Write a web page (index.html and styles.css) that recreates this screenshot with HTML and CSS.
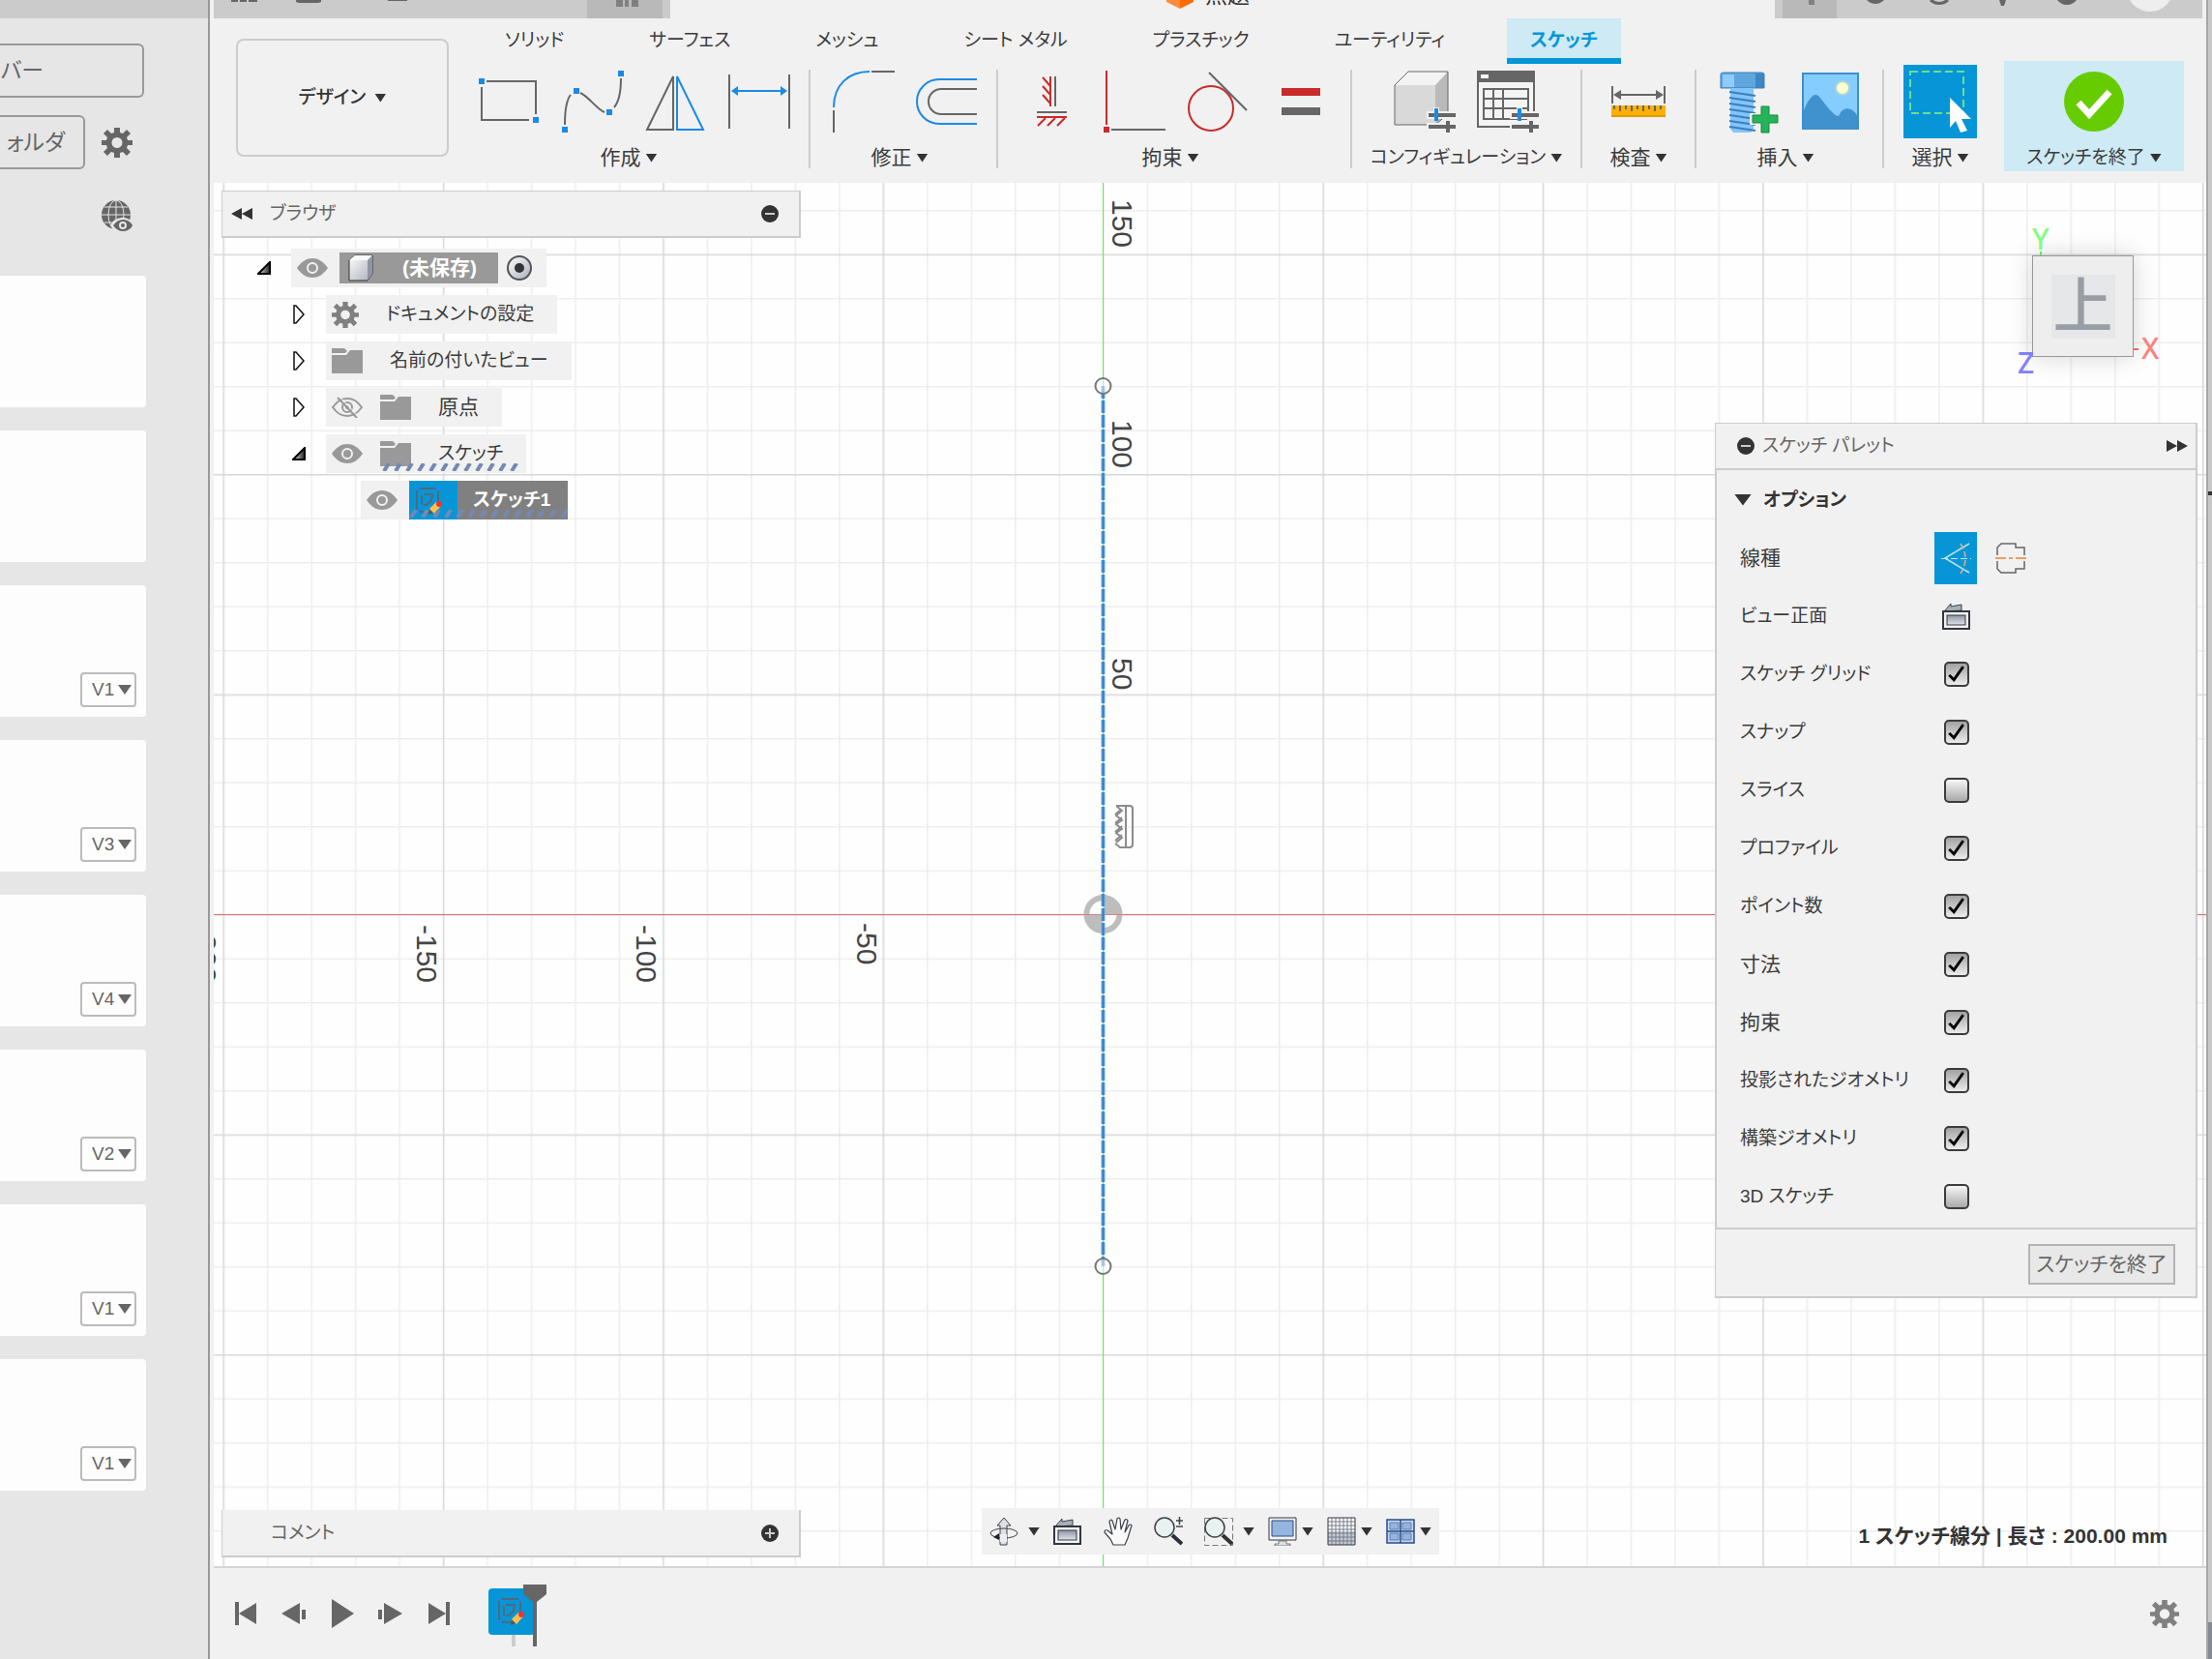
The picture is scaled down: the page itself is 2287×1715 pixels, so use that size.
FILE: index.html
```html
<!DOCTYPE html>
<html lang="ja">
<head>
<meta charset="utf-8">
<title>無題 - スケッチ</title>
<link rel="stylesheet" href="styles.css">
</head>
<body>
<svg class="sprite" aria-hidden="true">
  <defs>
    <linearGradient id="steel" x1="0" y1="0" x2="1" y2="1"><stop offset="0" stop-color="#fff"/><stop offset="1" stop-color="#a9aebb"/></linearGradient>
    <linearGradient id="steelV" x1="0" y1="0" x2="0" y2="1"><stop offset="0" stop-color="#8d95a3"/><stop offset="1" stop-color="#dfe4ea"/></linearGradient>
    <linearGradient id="fade" x1="0" y1="0" x2="1" y2="0"><stop offset="0" stop-color="#eee"/><stop offset="1" stop-color="#222"/></linearGradient>
    <pattern id="hatch" width="12" height="8" patternUnits="userSpaceOnUse"><path d="M2 8L7 0" stroke="#7389b3" stroke-width="4"/></pattern>
  </defs>
  <symbol id="gear" viewBox="0 0 32 32">
    <path fill-rule="evenodd" d="M13 1h6v5l3 1 4-4 4 4-4 4 1 3h5v5h-5l-1 3 4 4-4 4-4-4-3 1v5h-6v-5l-3-1-4 4-4-4 4-4-1-3H0v-5h5l1-3-4-4 4-4 4 4 3-1zM16 11a5 5 0 1 0 0 11a5 5 0 0 0 0-11z" fill="currentColor"/>
  </symbol>
  <symbol id="eye" viewBox="0 0 32 20">
    <path d="M0 10C5 3 10 0 16 0s11 3 16 10c-5 7-10 10-16 10S5 17 0 10z" fill="#999"/><circle cx="16" cy="10" r="5" fill="none" stroke="#f1f1f1" stroke-width="2"/>
  </symbol>
  <symbol id="eye-off" viewBox="0 0 32 22">
    <g fill="none" stroke="#999" stroke-width="2"><path d="M1 11C6 4 10 2 16 2s10 2 15 9c-5 7-9 9-15 9S6 18 1 11z"/><circle cx="16" cy="11" r="5"/><circle cx="16" cy="11" r="1"/><path d="M6 1L26 22"/></g><path d="M9 1L28 21" stroke="#f1f1f1" stroke-width="1"/>
  </symbol>
  <symbol id="folder" viewBox="0 0 32 26">
    <path d="M0 0h13l3 3-2 2H0z" fill="#999"/><path d="M0 7h15l4-5h13v24H0z" fill="#999"/>
  </symbol>
  <symbol id="look" viewBox="0 0 30 30">
    <path d="M2 10L9 2v3l11-2v6z" fill="#a7b0b8" stroke="#3d424a"/>
    <rect x="1" y="10" width="27" height="18" fill="#f4f4f6" stroke="#33373f" stroke-width="2"/>
    <rect x="5" y="14" width="19" height="10" fill="url(#steelV)" stroke="#33373f"/>
  </symbol>
  <symbol id="sketch" viewBox="0 0 40 40">
    <g fill="none" stroke="#4f6a7c" stroke-width="2"><path d="M8 8h22v14M8 8v24h14M13 14h11c0 7-4 11-11 12z"/></g>
    <g fill="#1a8ae6"><path d="M6 6h4v4H6zM28 6h4v4h-4zM6 30h4v4H6zM12 12h3v3h-3zM12 25h3v3h-3z"/></g>
    <path d="M20 35l1-6 4 4z" fill="#555"/><path d="M21 29l7-7 5 4-7 8z" fill="#ffc04d"/><circle cx="31" cy="24" r="3" fill="#e33"/>
  </symbol>
  <symbol id="minus" viewBox="0 0 20 20"><circle cx="10" cy="10" r="9" fill="#333"/><path d="M5 10h10" stroke="#ccc" stroke-width="2"/></symbol>
  <symbol id="plus" viewBox="0 0 20 20"><circle cx="10" cy="10" r="9" fill="#333"/><path d="M5 10h10M10 5v10" stroke="#ccc" stroke-width="2"/></symbol>
  <symbol id="closed" viewBox="0 0 14 20"><path d="M2 1h2l8 9-8 9H2z" fill="#fff" stroke="#111" stroke-width="1.5"/></symbol>
  <symbol id="open" viewBox="0 0 14 14"><path d="M13 1v12H1z" fill="url(#fade)" stroke="#000" stroke-width="2"/></symbol>
  <symbol id="adjust" viewBox="0 0 64 64">
    <path d="M34 42h7v-4h6v4h18v8h-5v4h5v8h-6v4h-6v-4H34v-8h18v-4H34z" fill="#f1f1f1"/>
    <path d="M36 44h28v4H36zM36 56h28v4H36zM54 52h4v12h-4z" fill="#666"/><path d="M42 39h4v13h-4z" fill="#1a8ae6"/>
  </symbol>
</svg>

<div class="app">
  <aside class="data-panel">
    <div class="data-top"></div>
    <div class="data-tools">
      <div class="data-row"><button class="side-button server">バー</button></div>
      <div class="data-row"><button class="side-button new-folder">ォルダ</button><svg class="side-icon"><use href="#gear"/></svg></div>
      <div class="data-row globe-row">
        <svg class="side-icon" viewBox="0 0 32 32"><circle cx="15" cy="15" r="15" fill="#666"/><g fill="none" stroke="#e6e6e6" stroke-width="1"><path d="M15 0v30M0 15h30M3 7h24M3 23h24"/><ellipse cx="15" cy="15" rx="8" ry="15"/></g><path d="M9 26c3-6 8-8 13-8s8 2 11 8c-3 6-8 8-12 8s-9-2-12-8z" fill="#e6e6e6"/><path d="M12 26c3-4 6-6 10-6s8 2 10 6c-2 4-6 6-10 6s-7-2-10-6z" fill="#666"/><circle cx="22" cy="26" r="3" fill="none" stroke="#e6e6e6" stroke-width="2"/></svg>
      </div>
    </div>
    <ul class="cards">
      <li class="card"></li>
      <li class="card"></li>
      <li class="card"><label class="version"><select aria-label="バージョン"><option>V1</option></select><i class="caret"></i></label></li>
      <li class="card"><label class="version"><select aria-label="バージョン"><option>V3</option></select><i class="caret"></i></label></li>
      <li class="card"><label class="version"><select aria-label="バージョン"><option>V4</option></select><i class="caret"></i></label></li>
      <li class="card"><label class="version"><select aria-label="バージョン"><option>V2</option></select><i class="caret"></i></label></li>
      <li class="card"><label class="version"><select aria-label="バージョン"><option>V1</option></select><i class="caret"></i></label></li>
      <li class="card"><label class="version"><select aria-label="バージョン"><option>V1</option></select><i class="caret"></i></label></li>
    </ul>
  </aside>

  <main class="workspace">
    <header class="titlebar">
      <div class="quick">
        <svg class="quick-icons" viewBox="0 0 386 19"><path d="M18 0h7v2h-7zM27 0h7v2h-7zM36 0h9v2h-9zM85 0h26v2l-3 1H88l-3-1zM180 0h20v1h-20z" fill="#666"/></svg>
        <div class="quick-active"><svg viewBox="0 0 78 19"><path d="M30 0h7v7h-7zM39 0h4v7h-4zM46 0h7v7h-7z" fill="#808080"/></svg></div>
      </div>
      <div class="doc-title"><svg viewBox="0 0 28 9"><path d="M0 0h14v9L0 2z" fill="#ff8b3d"/><path d="M14 0h14v2L14 9z" fill="#ff6b00"/></svg><span>無題</span></div>
      <div class="account">
        <div class="account-active"><svg viewBox="0 0 56 19"><path d="M27 0h6v5h-6z" fill="#808080"/></svg></div>
        <svg class="account-icons" viewBox="0 0 378 19"><path d="M31 0h18q-4 4-9 4t-9-4zM168 0h7l-2 6h-3zM228 0h20q-4 5-10 5t-10-5z" fill="#666"/><path d="M97 0q9 7 18 0" fill="none" stroke="#666" stroke-width="3"/><circle cx="324" cy="-12" r="24" fill="#eee"/></svg>
      </div>
    </header>

    <section class="ribbon">
      <button class="mode" aria-haspopup="menu">デザイン<i class="caret"></i></button>
      <div class="ribbon-body">
        <nav class="tabs">
          <button class="tab">ソリッド</button><button class="tab">サーフェス</button><button class="tab">メッシュ</button><button class="tab">シート メタル</button><button class="tab">プラスチック</button><button class="tab">ユーティリティ</button><button class="tab tab-on">スケッチ</button>
        </nav>
        <div class="groups">
          <div class="group">
            <div class="tools">
              <svg viewBox="0 0 64 64"><path d="M8 11H59V45M3 17V51H52" fill="none" stroke="#666" stroke-width="2"/><path d="M0 8h6v6H0zM56 48h6v6h-6z" fill="#1a8ae6"/></svg>
              <svg viewBox="0 0 64 64"><path d="M3 56C3 40 5 30 9 25M19 23C28 27 36 40 44 43M54 38C59 32 61 20 61 8" fill="none" stroke="#666" stroke-width="2"/><path d="M0 58h6v6H0zM12 18h6v6h-6zM46 40h6v6h-6zM58 0h6v6h-6z" fill="#1a8ae6"/></svg>
              <svg viewBox="0 0 64 64"><g fill="none" stroke-width="2"><path d="M2 61H29V6z" stroke="#666"/><path d="M33 61H60L33 6z" stroke="#1a8ae6"/></g></svg>
              <svg viewBox="0 0 64 64"><path d="M1 4V60M63 4V60" stroke="#666" stroke-width="2"/><path d="M8 21H56" stroke="#1a8ae6" stroke-width="2"/><path d="M3 21l7-5v10zM61 21l-7-5v10z" fill="#1a8ae6"/></svg>
            </div>
            <button class="menu">作成<i class="caret"></i></button>
          </div>
          <i class="sep"></i>
          <div class="group">
            <div class="tools">
              <svg viewBox="0 0 64 64"><g fill="none" stroke-width="2"><path d="M1 38C1 15 16 1 38 1" stroke="#1a8ae6"/><path d="M40 1H64M1 41V64" stroke="#666"/></g></svg>
              <svg viewBox="0 0 64 64"><g fill="none" stroke-width="2"><path d="M63 9H24A23 23 0 0 0 24 55H63" stroke="#1a8ae6"/><path d="M63 19H26A13 13 0 0 0 26 45H63" stroke="#666"/></g></svg>
            </div>
            <button class="menu">修正<i class="caret"></i></button>
          </div>
          <i class="sep"></i>
          <div class="group">
            <div class="tools">
              <svg viewBox="0 0 64 64"><g fill="none" stroke-width="2"><path d="M31 6V37M23 7l8 9M23 16l8 9M23 25l8 9M17 48H48M26 49l-8 8M36 49l-8 8M46 49l-8 8" stroke="#c92a2a"/><path d="M36 6V37M17 43H48" stroke="#666"/></g></svg>
              <svg viewBox="0 0 64 64"><path d="M3 0V56" stroke="#c92a2a" stroke-width="2"/><path d="M0 58h6v6H0z" fill="#c92a2a"/><path d="M8 61H64" stroke="#666" stroke-width="2"/></svg>
              <svg viewBox="0 0 64 64"><circle cx="25" cy="39" r="23" fill="none" stroke="#c92a2a" stroke-width="2"/><path d="M23 2L62 41" stroke="#666" stroke-width="2"/></svg>
              <svg viewBox="0 0 64 64"><path d="M12 18h40v8H12z" fill="#c92a2a"/><path d="M12 38h40v8H12z" fill="#666"/></svg>
            </div>
            <button class="menu">拘束<i class="caret"></i></button>
          </div>
          <i class="sep"></i>
          <div class="group config">
            <div class="tools">
              <svg viewBox="0 0 64 64"><path d="M1 15H43V56H1z" fill="#d9d9d9"/><path d="M1 15L15 1H56L43 15z" fill="#f3f3f3"/><path d="M43 15L56 1V45L43 56z" fill="#bababa"/><path d="M1 15L15 1H56V45L43 56H1z" fill="none" stroke="#666"/><use href="#adjust" width="64" height="64"/></svg>
              <svg viewBox="0 0 64 64"><path d="M1 1H59V58H1z" fill="#f4f4f4" stroke="#666" stroke-width="2"/><path d="M0 0h60v12H0z" fill="#666"/><path d="M4 4h8v4H4z" fill="#fff"/><path d="M7 19H53V50H7zM7 29H53M7 39H53M17 19V50M27 19V50" fill="none" stroke="#666" stroke-width="2"/><use href="#adjust" width="64" height="64"/></svg>
            </div>
            <button class="menu">コンフィギュレーション<i class="caret"></i></button>
          </div>
          <i class="sep"></i>
          <div class="group inspect">
            <div class="tools">
              <svg viewBox="0 0 64 64"><path d="M5 16V34M59 16V34M10 25H54" stroke="#666" stroke-width="2"/><path d="M6 25l8-5v10zM58 25l-8-5v10z" fill="#666"/><path d="M4 36h56v12H4z" fill="#ffb000"/><path d="M4 47H60" stroke="#e69a00" stroke-width="2"/><path d="M7 36v4M13 36v6M19 36v4M25 36v6M31 36v4M37 36v6M43 36v4M49 36v6M55 36v4" stroke="#666" stroke-width="2"/></svg>
            </div>
            <button class="menu">検査<i class="caret"></i></button>
          </div>
          <i class="sep"></i>
          <div class="group">
            <div class="tools">
              <svg viewBox="0 0 64 64"><path d="M2 4q0-2 3-2h39q3 0 3 2v14H2z" fill="#5fa6dc"/><path d="M4 4h12v13H4z" fill="#8ecbff"/><path d="M38 3h9v15h-9z" fill="#3b88c4"/><path d="M2 4q0-2 3-2h39q3 0 3 2v14H2z" fill="none" stroke="#3a7fb8"/><path d="M12 18h24v42l-3 4H15l-3-4z" fill="#82c4fb"/><path d="M11 22l27 4M11 28l27 4M11 34l27 4M11 40l27 4M11 46l27 4M11 52l27 4M11 58l27 4" stroke="#3a7fb8" stroke-width="2"/><path d="M42 35h12v9h10v12H54v9H42v-9H32V44h10z" fill="#f1f1f1"/><path d="M44 37h8v9h9v8h-9v10h-8V54h-9v-8h9z" fill="#27b35a" stroke="#178a40"/></svg>
              <svg viewBox="0 0 64 64"><path d="M1 3H58V60H1z" fill="#85ccff" stroke="#3d8fcb" stroke-width="2"/><path d="M2 41C8 26 14 22 18 27C26 37 33 47 38 47C42 38 50 36 57 46V60H2z" fill="#3f92cd"/><circle cx="42" cy="18" r="7" fill="#ffffd0" stroke="#a7d6d9" stroke-width="2"/></svg>
            </div>
            <button class="menu">挿入<i class="caret"></i></button>
          </div>
          <i class="sep"></i>
          <div class="group select">
            <div class="tools">
              <svg class="big" viewBox="0 0 76 76"><path d="M0 0h76v76H0z" fill="#0696d7"/><path d="M7 7H62V50H7z" fill="none" stroke="#6fdc8c" stroke-width="2" stroke-dasharray="8 4"/><path d="M48 34L70 56H60L66 68L59 70L54 58L48 65z" fill="#fff"/></svg>
            </div>
            <button class="menu">選択<i class="caret"></i></button>
          </div>
          <div class="group finish">
            <div class="tools"><svg viewBox="0 0 64 64"><circle cx="32" cy="32" r="31" fill="#6c0"/><path d="M16 33l11 12L48 22" fill="none" stroke="#fff" stroke-width="7"/></svg></div>
            <button class="menu">スケッチを終了<i class="caret"></i></button>
          </div>
        </div>
      </div>
    </section>

    <section class="canvas">
      <svg class="scene">
        <defs>
          <pattern id="minor" width="45.48" height="45.5" patternUnits="userSpaceOnUse"><path d="M0 0H46M0 0V46" stroke="#000" stroke-opacity=".16" stroke-width="3"/></pattern>
          <pattern id="major" width="227.4" height="227.5" patternUnits="userSpaceOnUse"><path d="M0 0H228M0 0V228" stroke="#000" stroke-opacity=".13" stroke-width="3"/></pattern>
        </defs>
        <g transform="translate(919 756)">
          <rect x="-3000" y="-3000" width="8000" height="8000" fill="url(#minor)" opacity=".4"/>
          <rect x="-3000" y="-3000" width="8000" height="8000" fill="url(#major)" opacity=".7"/>
          <path d="M-3000 .5H5000" stroke="#e06c6c"/><path d="M.5 -3000V5000" stroke="#66e866"/>
          <g class="scale">
            <text transform="translate(10 -739) rotate(90)">150</text><text transform="translate(10 -511) rotate(90)">100</text><text transform="translate(10 -265) rotate(90)">50</text>
            <text transform="translate(-937 11) rotate(90)">-200</text><text transform="translate(-709 11) rotate(90)">-150</text><text transform="translate(-482 11) rotate(90)">-100</text><text transform="translate(-254 9) rotate(90)">-50</text>
          </g>
          <circle cx=".5" r="17" fill="#fff" stroke="#bdbdbd" stroke-width="6"/><path d="M.5 0V-18A18 18 0 0 1 18.500 0zM.5 0V18A18 18 0 0 1 -17.500 0z" fill="#bdbdbd"/><path d="M-20 .5H20" stroke="#d98080"/>
          <path d="M.5 -546V364" stroke="#62acf2" stroke-width="4" stroke-dasharray="13 2"/><path d="M.5 -546V364" stroke="#3c7dba" stroke-width="2" stroke-dasharray="13 2"/>
          <circle cx=".5" cy="-546" r="8" fill="#fff" fill-opacity=".5" stroke="#777" stroke-width="2"/><circle cx=".5" cy="364" r="8" fill="#fff" fill-opacity=".5" stroke="#777" stroke-width="2"/>
          <g fill="none" stroke="#8c8c8c" stroke-width="2"><path d="M14 -112H28q3 0 3 3V-72q0 3-3 3H18l-5-4M24 -112V-69"/><path d="M19 -108l-6 5M20 -100l-7 6M20 -91l-7 6M20 -82l-7 6M14 -112l6 5-6 5 6 5-6 4 6 5-6 4 6 5-6 5"/></g>
        </g>
      </svg>

      <aside class="browser">
        <div class="panel-head"><svg class="arrows" viewBox="0 0 22 12"><path d="M11 0v12L0 6zM22 0v12L11 6z" fill="#333"/></svg><span>ブラウザ</span><svg class="round"><use href="#minus"/></svg></div>
        <ul class="tree">
          <li class="node root"><svg class="tri-open"><use href="#open"/></svg><div class="chip"><svg class="i-eye"><use href="#eye"/></svg><div class="name-sel"><svg class="i-cube" viewBox="0 0 26 28"><path d="M1 6L7 1H25V20L20 27H1z" fill="url(#steel)" stroke="#333"/><path d="M1 6L7 1H25L20 6z" fill="#f8f8fa"/><path d="M20 6L25 1V20L20 27z" fill="#8f96a3"/></svg><span class="kanji">(未保存)</span></div><svg class="i-radio" viewBox="0 0 26 26"><circle cx="13" cy="13" r="12" fill="url(#steel)" stroke="#555" stroke-width="2"/><circle cx="13" cy="13" r="5" fill="#333"/></svg></div></li>
          <li class="node"><svg class="tri"><use href="#closed"/></svg><div class="chip"><svg class="i-gear"><use href="#gear"/></svg><span>ドキュメントの設定</span></div></li>
          <li class="node"><svg class="tri"><use href="#closed"/></svg><div class="chip"><svg class="i-folder"><use href="#folder"/></svg><span>名前の付いたビュー</span></div></li>
          <li class="node"><svg class="tri"><use href="#closed"/></svg><div class="chip"><svg class="i-off"><use href="#eye-off"/></svg><svg class="i-folder second"><use href="#folder"/></svg><span class="kanji">原点</span></div></li>
          <li class="node"><svg class="tri-open"><use href="#open"/></svg><div class="chip"><svg class="i-eye"><use href="#eye"/></svg><svg class="i-folder second"><use href="#folder"/></svg><span>スケッチ</span><svg class="hatch"><rect width="100%" height="8" fill="url(#hatch)"/></svg></div></li>
          <li class="node leaf"><div class="chip active"><svg class="i-eye"><use href="#eye"/></svg><div class="sk"><svg><use href="#sketch"/></svg></div><div class="sk-name">スケッチ1</div><svg class="hatch"><rect width="100%" height="8" fill="url(#hatch)"/></svg></div></li>
        </ul>
      </aside>

      <div class="viewcube">
        <span class="ax ax-y">Y</span><span class="ax ax-x">X</span><span class="ax ax-z">Z</span>
        <button class="face"><span>上</span></button>
      </div>

      <aside class="palette">
        <div class="panel-head"><svg class="round"><use href="#minus"/></svg><span>スケッチ パレット</span><svg class="arrows" viewBox="0 0 22 12"><path d="M0 0v12L11 6zM11 0v12L22 6z" fill="#333"/></svg></div>
        <div class="options">
          <div class="opt-title"><i class="caret"></i>オプション</div>
          <div class="opt"><span class="kanji">線種</span><button class="line on" aria-label="コンストラクション"><svg viewBox="0 0 44 54"><g fill="none" stroke="#c7e3f3"><path d="M36 12L11 27L36 42" stroke-width="1.5"/><path d="M7 27.5H38" stroke-dasharray="7 3"/></g><path d="M27 12q10 15 0 31" fill="none" stroke="#e3b08a" stroke-width="1.5" stroke-dasharray="6 3"/></svg></button><button class="line" aria-label="中心線"><svg viewBox="0 0 44 54"><path d="M10 24V16l4-4H29v4H38v8M10 30v8l4 4H29v-4H38v-8" fill="none" stroke="#666" stroke-width="1.5"/><path d="M8 27H40" stroke="#ec8232" stroke-width="1.5" stroke-dasharray="11 3 4 3"/></svg></button></div>
          <div class="opt"><span>ビュー正面</span><button class="look" aria-label="ビュー正面"><svg><use href="#look"/></svg></button></div>
          <label class="opt"><span>スケッチ グリッド</span><input type="checkbox" checked></label>
          <label class="opt"><span>スナップ</span><input type="checkbox" checked></label>
          <label class="opt"><span>スライス</span><input type="checkbox"></label>
          <label class="opt"><span>プロファイル</span><input type="checkbox" checked></label>
          <label class="opt"><span>ポイント数</span><input type="checkbox" checked></label>
          <label class="opt"><span class="kanji">寸法</span><input type="checkbox" checked></label>
          <label class="opt"><span class="kanji">拘束</span><input type="checkbox" checked></label>
          <label class="opt"><span>投影されたジオメトリ</span><input type="checkbox" checked></label>
          <label class="opt"><span>構築ジオメトリ</span><input type="checkbox" checked></label>
          <label class="opt"><span>3D スケッチ</span><input type="checkbox"></label>
        </div>
        <div class="palette-foot"><button>スケッチを終了</button></div>
      </aside>

      <div class="panel-head comments"><span>コメント</span><svg class="round"><use href="#plus"/></svg></div>

      <div class="navbar">
        <button class="nav orbit" aria-label="オービット"><svg viewBox="0 0 30 30"><path d="M11 29V9H8L15 1l7 8h-4v20z" fill="#dde0e4" stroke="#3d424a"/><ellipse cx="15" cy="17" rx="14" ry="5" fill="none" stroke="#3d424a"/><path d="M11 18h7v8h-7z" fill="#eceef0"/><path d="M4 21l6-4v7z" fill="#222"/></svg><i class="caret"></i></button>
        <button class="nav" aria-label="ビュー正面"><svg><use href="#look"/></svg></button>
        <button class="nav" aria-label="画面移動"><svg viewBox="0 0 30 30"><path d="M10 29L7 23L1 16q0-3 3-2l5 4L6 5q1-3 3-1l3 9L14 2q2-2 3 0l1 11L22 3q2-1 3 1l-3 12 4-7q2-2 3 0L25 22l-3 7z" fill="#fafafa" stroke="#3d424a" stroke-width="1.2" stroke-linejoin="round"/></svg></button>
        <button class="nav" aria-label="ズーム"><svg viewBox="0 0 30 30"><path d="M19 19L29 28" stroke="#2d3038" stroke-width="4"/><circle cx="11" cy="11" r="10" fill="#e8f2f1" stroke="#3d424a" stroke-width="1.5"/><path d="M23 4h7M26.500 0v8M23 10h7" stroke="#3d424a" stroke-width="1.5"/></svg></button>
        <button class="nav" aria-label="窓ズーム"><svg viewBox="0 0 30 30"><path d="M.5 1.500H29.500V29.500H.5z" fill="none" stroke="#777" stroke-dasharray="6 3"/><path d="M19 19L29 28" stroke="#333" stroke-width="4"/><circle cx="11" cy="11" r="10" fill="#e8f2f1" stroke="#3d424a" stroke-width="1.5"/></svg><i class="caret"></i></button>
        <button class="nav tight" aria-label="表示設定"><svg viewBox="0 0 30 30"><path d="M1 1H29V24H1z" fill="#f2f2f4" stroke="#33373f"/><path d="M4 4H26V20H4z" fill="#93b5de" stroke="#2b4c86"/><path d="M11 25h8v3h4v2H7v-2h4z" fill="#dcdfe6" stroke="#555" stroke-width=".7"/></svg><i class="caret"></i></button>
        <button class="nav tight" aria-label="グリッドとスナップ"><svg viewBox="0 0 30 30"><path d="M1 1H29V29H1z" fill="#fff"/><path d="M1 15H29V29H1z" fill="#c4c9d6"/><path d="M1 5H29M1 9H29M1 13H29M1 17H29M1 21H29M1 25H29M5 1V29M9 1V29M13 1V29M17 1V29M21 1V29M25 1V29" fill="none" stroke="#777c88"/><path d="M1 1H29V29H1z" fill="none" stroke="#33373f"/></svg><i class="caret"></i></button>
        <button class="nav tight" aria-label="ビューポート"><svg viewBox="0 0 30 30"><path d="M1 3H29V27H1z" fill="#c4d7ee" stroke="#2b4c86" stroke-width="1.500"/><path d="M4 6h9v7H4zM17 6h9v7h-9zM4 17h9v7H4zM17 17h9v7h-9z" fill="#93b5de" stroke="#5f7fb4"/><path d="M15 3V27M1 15H29" stroke="#2b4c86" stroke-width="1.500"/></svg><i class="caret"></i></button>
      </div>

      <div class="status">1 スケッチ線分 | 長さ : 200.00 mm</div>
    </section>

    <footer class="timeline">
      <div class="player">
        <button aria-label="先頭へ"><svg viewBox="0 0 26 32"><path d="M1 4h4v24H1zM23 5v22L5 16z" fill="#666"/></svg></button>
        <button aria-label="前へ"><svg viewBox="0 0 26 32"><path d="M18 5v22L-1 16zM20 12h4v10h-4z" fill="#666"/></svg></button>
        <button aria-label="再生"><svg viewBox="0 0 26 32"><path d="M1 1v30l23-15z" fill="#666"/></svg></button>
        <button aria-label="次へ"><svg viewBox="0 0 26 32"><path d="M5 5v22l19-11zM-1 12h4v10h-4z" fill="#666"/></svg></button>
        <button aria-label="末尾へ"><svg viewBox="0 0 26 32"><path d="M19 4h4v24h-4zM1 5v22l18-11z" fill="#666"/></svg></button>
      </div>
      <div class="feature"><svg viewBox="0 0 60 64"><path d="M24 50h4v14h-4z" fill="#ccc"/><rect y="4" width="48" height="48" rx="4" fill="#0696d7"/><use href="#sketch" x="3" y="7" width="40" height="40"/><path d="M36 0h24v10l-10 8V64h-4V18L36 10z" fill="#666"/></svg></div>
      <button class="settings" aria-label="設定"><svg><use href="#gear"/></svg></button>
    </footer>
  </main>
  <div class="edge"></div>
</div>
</body>
</html>
```
FILE: styles.css
```css
* { box-sizing: border-box; }

body {
  margin: 0;
  font-family: "Liberation Sans", "Noto Sans CJK JP", sans-serif;
  font-size: 19px;
  line-height: 24px;
  font-feature-settings: "palt";
  color: #3c3c3c;
  background: #f1f1f1;
}

button, select, input { margin: 0; padding: 0; border: 0; background: none; font: inherit; font-feature-settings: inherit; color: inherit; }
button { display: flex; align-items: center; justify-content: center; white-space: nowrap; }
ul { margin: 0; padding: 0; list-style: none; }
svg { display: block; flex: none; }
.sprite { position: absolute; width: 0; height: 0; }
.caret { flex: none; width: 12px; height: 9px; background: #333; clip-path: polygon(0 0, 100% 0, 50% 100%); }
.kanji { font-size: 21px; }

.app { display: grid; grid-template-columns: 217px minmax(0, 1fr) 6px; height: 100vh; overflow: hidden; }

/* Data panel */
.data-panel { background: #e6e6e6; border-right: 2px solid #999; overflow: hidden; color: #666; }
.data-top { height: 19px; background: #cbcbcb; }
.data-tools { height: 266px; padding-top: 26px; }
.data-row { display: flex; align-items: center; gap: 17px; height: 56px; margin-bottom: 18px; }
.side-button { height: 56px; justify-content: flex-end; border: 2px solid #999; border-left: 0; border-radius: 0 6px 6px 0; font-size: 23px; }
.server { width: 149px; padding-right: 102px; }
.new-folder { width: 88px; padding-right: 19px; }
.side-icon { width: 32px; height: 32px; overflow: visible; }
.globe-row { padding-left: 105px; height: 60px; }
.cards { display: grid; gap: 24px; }
.card { display: flex; align-items: flex-end; justify-content: flex-end; width: 151px; height: 136px; padding: 10px; background: #fdfdfd; border-radius: 0 4px 4px 0; }
.version { display: flex; align-items: center; width: 58px; height: 36px; padding: 0 3px 0 10px; border: 2px solid #bbb; border-radius: 4px; }
.version select { flex: 1; min-width: 0; appearance: none; font-size: 19px; color: #666; }
.version .caret { width: 14px; height: 10px; background: #666; }

/* Workspace */
.workspace { display: flex; flex-direction: column; min-width: 0; padding-left: 4px; background: #f1f1f1; }
.titlebar { display: flex; justify-content: space-between; flex: none; height: 19px; padding-right: 4px; overflow: hidden; }
.quick { display: flex; width: 472px; background: #cbcbcb; }
.quick-icons { width: 386px; height: 19px; }
.quick-active { width: 78px; background: #b9b9b9; }
.doc-title { display: flex; gap: 12px; margin-right: 30px; color: #333; font-size: 23px; }
.doc-title svg { width: 28px; height: 9px; }
.doc-title span { margin-top: -17px; }
.account { display: flex; width: 442px; padding-left: 8px; background: #cbcbcb; }
.account-active { width: 56px; background: #b9b9b9; }
.account-icons { width: 378px; height: 19px; }

.ribbon { display: flex; flex: none; height: 170px; padding-left: 23px; gap: 20px; }
.mode { gap: 9px; width: 220px; height: 122px; margin-top: 21px; border: 2px solid #ccc; border-radius: 8px; font-weight: 500; color: #333; }
.ribbon-body { flex: 1; min-width: 0; }
.tabs { display: flex; gap: 40px; height: 47px; padding-left: 14px; }
.tab { padding: 0 24px 2px; }
.tab-on { padding-top: 4px; padding-bottom: 0; border-bottom: 6px solid #0696d7; background: #cdeaf5; color: #0696d7; font-weight: 700; }
.groups { display: flex; padding-top: 6px; }
.sep { flex: none; width: 2px; height: 102px; background: #ccc; }
.group { display: flex; flex-direction: column; align-items: center; flex: none; margin-top: -5px; padding: 0 19px 0 23px; }
.group:first-child { padding-left: 11px; }
.tools { display: flex; align-items: center; gap: 22px; height: 76px; }
.tools svg { width: 64px; height: 64px; overflow: visible; }
.tools .big { width: 76px; height: 76px; }
.menu { gap: 5px; height: 24px; margin: 8px 12px 0 0; font-size: 21px; }
.config { width: 236px; padding: 0; }
.inspect { width: 116px; padding: 0; }
.select { padding-left: 20px; padding-right: 28px; }
.finish { width: 186px; height: 114px; margin-top: -9px; padding: 4px 0 0; background: #cdeaf5; }
.config .menu, .finish .menu { margin-right: 0; font-size: 19px; }
.inspect .menu, .select .menu { margin-right: 0; }

/* Canvas */
.canvas { position: relative; flex: 1; min-height: 0; overflow: hidden; background: #fefefe; }
.scene { position: absolute; inset: 0; width: 100%; height: 100%; }
.scale { font-size: 30px; fill: #444; }
.panel-head { display: flex; align-items: center; height: 49px; border: 1px solid #ccc; border-right-width: 2px; border-bottom-width: 2px; background: #f1f1f1; color: #666; }
.panel-head .round { width: 20px; height: 20px; }
.panel-head .arrows { width: 22px; height: 12px; }

.browser { position: absolute; left: 8px; top: 8px; width: 599px; }
.browser .panel-head { padding: 0 20px 0 9px; gap: 18px; }
.browser .panel-head .round, .comments .round { margin-left: auto; }
.tree { padding: 11px 0 0 72px; display: grid; gap: 8px; }
.node { display: flex; align-items: center; height: 40px; }
.node.root { margin-left: -36px; }
.tri { width: 14px; height: 20px; margin: 0 21px 0 1px; }
.tri-open { width: 14px; height: 14px; margin: 0 21px 0 1px; }
.leaf { padding-left: 72px; }
.chip { position: relative; display: flex; align-items: center; height: 40px; padding: 0 24px 0 6px; background: #f1f1f1; white-space: nowrap; }
.root .chip { padding-right: 15px; }
.i-eye { width: 32px; height: 20px; }
.i-off { width: 32px; height: 22px; }
.i-gear { width: 28px; height: 28px; color: #808080; }
.i-folder { width: 32px; height: 26px; }
.second { margin-left: 18px; }
.chip > span { margin-left: 28px; }
.name-sel { display: flex; align-items: center; gap: 30px; width: 164px; height: 32px; margin: 0 9px 0 12px; padding-left: 9px; background: #999; color: #fff; font-weight: 700; }
.i-cube { width: 26px; height: 28px; }
.i-radio { width: 26px; height: 26px; }
.hatch { position: absolute; right: 8px; bottom: 2px; width: 141px; height: 8px; }
.chip.active { padding-right: 0; }
.sk { width: 50px; height: 40px; margin-left: 12px; background: #0696d7; }
.sk svg { width: 40px; height: 40px; }
.sk-name { width: 114px; padding-left: 16px; line-height: 40px; background: #808080; color: #fff; font-weight: 700; }
.active .hatch { right: 0; width: 164px; }

.viewcube { position: absolute; right: 75px; top: 75px; width: 105px; height: 105px; }
.viewcube::before, .viewcube::after { content: ""; position: absolute; background: #ff6060; right: -5px; top: 96px; width: 5px; height: 2px; }
.viewcube::after { background: #60e860; left: 8px; top: -4px; width: 2px; height: 4px; }
.face { width: 105px; height: 105px; border: 1px solid #999; background: #eee; box-shadow: 0 0 24px rgba(0, 0, 0, .16); }
.face span { width: 66px; height: 66px; line-height: 68px; font-size: 62px; background: #e6e7e9; color: #999da5; font-weight: 500; }
.ax { position: absolute; font-size: 30px; line-height: 30px; font-family: "Noto Sans", sans-serif; font-weight: 500; }
.ax-y { left: 0; top: -32px; color: #80ff80; }
.ax-x { left: 113px; top: 81px; color: #ff8080; }
.ax-z { left: -15px; top: 96px; color: #8080ff; }

.palette { position: absolute; right: 9px; top: 248px; width: 499px; }
.palette .panel-head { padding: 0 8px 0 21px; gap: 7px; }
.palette .arrows { margin-left: auto; }
.options { border: 2px solid #ccc; border-top: 0; background: #f1f1f1; padding-bottom: 2px; }
.opt-title { display: flex; align-items: center; gap: 12px; height: 61px; padding-left: 18px; font-weight: 700; color: #333; }
.opt-title .caret { width: 18px; height: 12px; }
.opt { display: flex; align-items: center; height: 60px; padding-left: 24px; }
.opt > span { width: 211px; }
.opt input { appearance: none; width: 26px; height: 26px; border: 2px solid #3c3c3c; border-radius: 5px; background: linear-gradient(#f6f6f6, #a9a9a9); }
.opt input:checked { background: linear-gradient(#a2a2a2, #ececec); }
.opt input:checked::before { content: ""; display: block; width: 22px; height: 22px; background: #000; clip-path: polygon(10% 58%, 20% 50%, 36% 66%, 76% 10%, 86% 18%, 38% 86%); }
.line { width: 44px; height: 54px; margin-left: -10px; }
.line + .line { margin-left: 11px; }
.line svg { width: 44px; height: 54px; }
.line.on { background: #0696d7; }
.look { margin-left: -2px; }
.look svg, .nav svg { width: 30px; height: 30px; }
.palette-foot { display: flex; justify-content: flex-end; height: 71px; padding: 15px 21px 0 0; border: 1px solid #ccc; border-right-width: 2px; border-bottom-width: 2px; border-top: 0; background: #f1f1f1; }
.palette-foot button { width: 152px; height: 42px; border: 2px solid #b4b4b4; background: #e8e8e8; color: #666; font-size: 21px; }

.comments { position: absolute; left: 8px; bottom: 9px; width: 599px; padding: 0 20px 0 50px; border-top: 0; }
.navbar { position: absolute; left: 794px; bottom: 12px; display: flex; align-items: center; gap: 22px; height: 48px; padding: 0 8px; background: #f1f1f1; }
.nav { gap: 10px; }
.nav.tight { gap: 5px; }
.nav + .tight, .orbit + .nav { margin-left: -8px; }
.status { position: absolute; right: 40px; bottom: 19px; font-size: 21px; font-weight: 700; color: #333; }

/* Timeline */
.timeline { display: flex; align-items: center; flex: none; height: 96px; padding: 4px 28px 0 21px; border-top: 2px solid #d4d4d4; background: #f1f1f1; }
.player { display: flex; gap: 24px; margin-bottom: 4px; }
.player svg { width: 26px; height: 32px; overflow: visible; }
.feature { margin-left: 37px; }
.feature svg { width: 60px; height: 64px; }
.settings { margin: 0 0 4px auto; color: #808080; }
.settings svg { width: 30px; height: 30px; }
.edge { border-left: 2px solid #a6a6a6; background: linear-gradient(#c8c8c8 0 508px, #333 508px 512px, #c8c8c8 512px 1677px, #858b92 1677px); }
```
